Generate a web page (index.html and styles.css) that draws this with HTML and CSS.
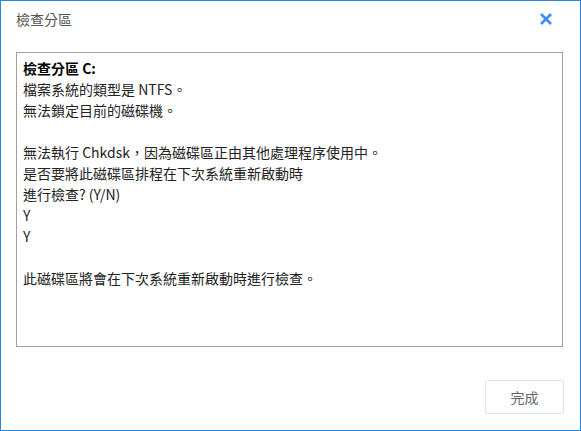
FILE: index.html
```html
<!DOCTYPE html>
<html lang="zh-Hant">
<head>
    <meta charset="UTF-8">
    <title>檢查分區</title>
    <link rel="stylesheet" href="styles.css">
</head>
<body>
    <div class="dialog">
        <div class="dialog-header">
            <span class="dialog-title">檢查分區</span>
            <button class="close-btn" aria-label="關閉">
                <svg width="12" height="12" viewBox="0 0 12 12">
                    <path d="M1 1 L11 11 M11 1 L1 11" stroke="#3a8ef6" stroke-width="2.6" fill="none"/>
                </svg>
            </button>
        </div>

        <!-- Chkdsk output -->
        <div class="output-box">
            <div class="line bold">檢查分區 C:</div>
            <div class="line">檔案系統的類型是 NTFS。</div>
            <div class="line">無法鎖定目前的磁碟機。</div>
            <div class="line">&nbsp;</div>
            <div class="line">無法執行 Chkdsk，因為磁碟區正由其他處理程序使用中。</div>
            <div class="line">是否要將此磁碟區排程在下次系統重新啟動時</div>
            <div class="line">進行檢查? (Y/N)</div>
            <div class="line">Y</div>
            <div class="line">Y</div>
            <div class="line">&nbsp;</div>
            <div class="line">此磁碟區將會在下次系統重新啟動時進行檢查。</div>
        </div>

        <div class="dialog-footer">
            <button class="done-btn">完成</button>
        </div>
    </div>
</body>
</html>
```

FILE: styles.css
```css
/* Dialog window */
body {
    margin: 0;
    padding: 0;
    background: #fff;
    font-family: "Noto Sans CJK TC", sans-serif;
    font-size: 14px;
}
.dialog {
    width: 581px;
    height: 431px;
    box-sizing: border-box;
    border: 1px solid #2b88d8;
    display: flex;
    flex-direction: column;
}
.dialog-header {
    height: 36px;
    display: flex;
    align-items: center;
    justify-content: space-between;
    padding: 0 28px 0 15px;
}
.dialog-title {
    color: #555;
    font-size: 14px;
    line-height: 20px;
}
.close-btn {
    border: none;
    background: none;
    padding: 0;
    width: 12px;
    height: 12px;
    display: flex;
    cursor: pointer;
}
.output-box {
    margin: 15px 0 0 15px;
    width: 547px;
    height: 295px;
    box-sizing: border-box;
    border: 1px solid #a0a0a0;
    padding: 5px 6px;
    color: #222;
}
.line {
    line-height: 21px;
    height: 21px;
    white-space: nowrap;
}
.bold {
    font-weight: bold;
    color: #000;
}
.dialog-footer {
    display: flex;
    justify-content: flex-end;
    padding: 33px 16px 0 0;
}
.done-btn {
    width: 79px;
    height: 34px;
    border: 1px solid #dfe5ec;
    border-radius: 2px;
    background: #fff;
    color: #666;
    font-family: "Noto Sans CJK TC", sans-serif;
    font-size: 14px;
    cursor: pointer;
}
```
